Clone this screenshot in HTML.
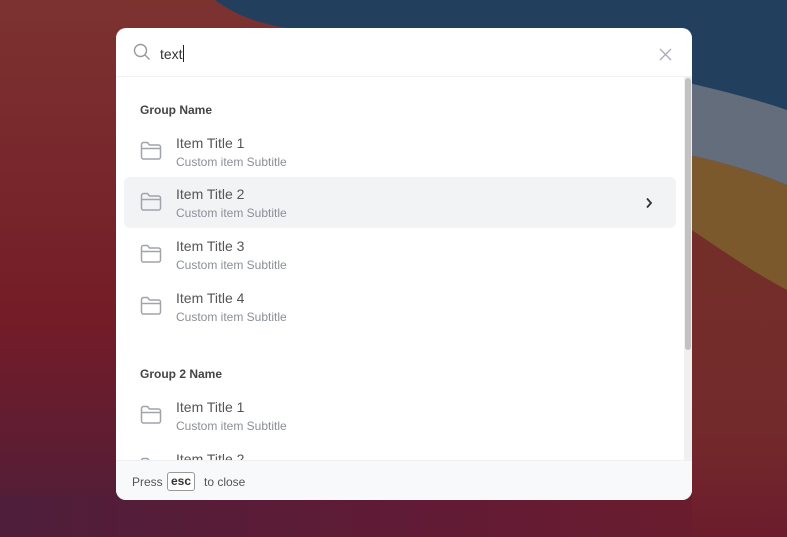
<!DOCTYPE html>
<html><head><style>
html,body{margin:0;width:787px;height:537px;overflow:hidden;font-family:"Liberation Sans",sans-serif;}
.bg{position:absolute;left:0;top:0}
.modal{position:absolute;left:116px;top:28px;width:576px;height:472px;background:#fff;border-radius:10px;overflow:hidden}
.hdr{position:absolute;left:0;top:0;width:576px;height:48px;border-bottom:1px solid #eef0f2}
.q{position:absolute;left:44px;top:17px;font-size:14px;color:#333}
.caret{display:inline-block;width:1px;height:17px;background:#222;vertical-align:-3px}
.scroll{position:absolute;left:0;top:49px;width:568px;height:383px;overflow:hidden}
.sb{position:absolute;left:568px;top:49px;width:8px;height:383px;background:#f0f0f0}
.thumb{position:absolute;left:569px;top:50px;width:6px;height:272px;background:#c2c2c2;border-radius:3px}
.g{position:absolute;left:24px;font-size:12px;font-weight:bold;color:#444}
.it{position:absolute;left:8px;width:552px;height:51px;border-radius:6px}
.it.sel{background:#f2f3f5}
.it svg.f{position:absolute;left:16px;top:15px}
.t{position:absolute;left:52px;top:9px;font-size:14px;color:#555}
.s{position:absolute;left:52px;top:29px;font-size:12px;color:#8a8f98}
.ft{position:absolute;left:0;top:432px;width:576px;height:40px;background:#f8f9fb;border-top:1px solid #eef0f2;font-size:12px;color:#555}
.kbd{position:absolute;left:51px;top:11px;width:26px;height:17px;border:1px solid #999;border-radius:3px;background:#fff;font-size:12px;font-weight:bold;text-align:center;line-height:16px;color:#333}
</style></head><body>
<svg class="bg" width="787" height="537">
<defs>
<linearGradient id="r" x1="0" y1="0" x2="0" y2="1"><stop offset="0" stop-color="#7c3330"/><stop offset=".6" stop-color="#741c28"/><stop offset="1" stop-color="#4e1e3a"/></linearGradient>
<linearGradient id="rb" x1="0" y1="0" x2="0" y2="1"><stop offset="0" stop-color="#74302a"/><stop offset=".7" stop-color="#732a2b"/><stop offset="1" stop-color="#6c1c2c"/></linearGradient>
<linearGradient id="bs" x1="0" y1="0" x2="1" y2="0"><stop offset="0" stop-color="#4e1e3a"/><stop offset=".5" stop-color="#601b36"/><stop offset="1" stop-color="#6e1c2c"/></linearGradient>
</defs>
<rect width="787" height="537" fill="url(#r)"/>
<rect x="0" y="495" width="787" height="42" fill="url(#bs)"/>
<path d="M600 180 C660 200 720 255 787 290 L787 537 L692 537 L692 495 L600 495Z" fill="url(#rb)"/>
<path d="M600 140 C680 150 740 165 787 185 L787 290 C720 255 660 200 600 180Z" fill="#7b592d"/>
<path d="M260 30 C450 40 650 60 787 110 L787 185 C740 165 680 150 600 140 L600 60 C450 55 300 50 260 30Z" fill="#646d7c"/>
<path d="M215 0 L787 0 L787 110 C700 80 500 40 300 30 C260 25 235 15 215 0Z" fill="#22405e"/>
</svg>
<div class="modal">
<div class="hdr">
<svg style="position:absolute;left:17px;top:15px" width="18" height="18" viewBox="0 0 18 18" fill="none" stroke="#999" stroke-width="1.4"><circle cx="7.5" cy="7.5" r="6"/><path d="M12 12l4.5 4.5"/></svg>
<div class="q">text<span class="caret"></span></div>
<svg style="position:absolute;left:543px;top:20px" width="13" height="13" viewBox="0 0 13 13" stroke="#aab" stroke-width="1.3"><path d="M1 1L12 12M12 1L1 12"/></svg>
</div>
<div class="scroll">
<div class="g" style="top:26px">Group Name</div>
<div class="it" style="top:49px"><svg class="f" width="22" height="20" viewBox="0 0 22 20" fill="none" stroke="#a0a4ab" stroke-width="1.5"><path d="M1.5 3.5a2 2 0 0 1 2-2h4l2 2.5h9a2 2 0 0 1 2 2v10a2 2 0 0 1-2 2h-15a2 2 0 0 1-2-2z M1.5 7.5h19"/></svg><div class="t">Item Title 1</div><div class="s">Custom item Subtitle</div></div>
<div class="it sel" style="top:100px"><svg class="f" width="22" height="20" viewBox="0 0 22 20" fill="none" stroke="#a0a4ab" stroke-width="1.5"><path d="M1.5 3.5a2 2 0 0 1 2-2h4l2 2.5h9a2 2 0 0 1 2 2v10a2 2 0 0 1-2 2h-15a2 2 0 0 1-2-2z M1.5 7.5h19"/></svg><div class="t">Item Title 2</div><div class="s">Custom item Subtitle</div>
<svg style="position:absolute;left:521px;top:20px" width="8" height="12" viewBox="0 0 8 12" fill="none" stroke="#333" stroke-width="1.8"><path d="M2 1.5L6 6L2 10.5"/></svg></div>
<div class="it" style="top:152px"><svg class="f" width="22" height="20" viewBox="0 0 22 20" fill="none" stroke="#a0a4ab" stroke-width="1.5"><path d="M1.5 3.5a2 2 0 0 1 2-2h4l2 2.5h9a2 2 0 0 1 2 2v10a2 2 0 0 1-2 2h-15a2 2 0 0 1-2-2z M1.5 7.5h19"/></svg><div class="t">Item Title 3</div><div class="s">Custom item Subtitle</div></div>
<div class="it" style="top:204px"><svg class="f" width="22" height="20" viewBox="0 0 22 20" fill="none" stroke="#a0a4ab" stroke-width="1.5"><path d="M1.5 3.5a2 2 0 0 1 2-2h4l2 2.5h9a2 2 0 0 1 2 2v10a2 2 0 0 1-2 2h-15a2 2 0 0 1-2-2z M1.5 7.5h19"/></svg><div class="t">Item Title 4</div><div class="s">Custom item Subtitle</div></div>
<div class="g" style="top:290px">Group 2 Name</div>
<div class="it" style="top:313px"><svg class="f" width="22" height="20" viewBox="0 0 22 20" fill="none" stroke="#a0a4ab" stroke-width="1.5"><path d="M1.5 3.5a2 2 0 0 1 2-2h4l2 2.5h9a2 2 0 0 1 2 2v10a2 2 0 0 1-2 2h-15a2 2 0 0 1-2-2z M1.5 7.5h19"/></svg><div class="t">Item Title 1</div><div class="s">Custom item Subtitle</div></div>
<div class="it" style="top:365px"><svg class="f" width="22" height="20" viewBox="0 0 22 20" fill="none" stroke="#a0a4ab" stroke-width="1.5"><path d="M1.5 3.5a2 2 0 0 1 2-2h4l2 2.5h9a2 2 0 0 1 2 2v10a2 2 0 0 1-2 2h-15a2 2 0 0 1-2-2z M1.5 7.5h19"/></svg><div class="t">Item Title 2</div><div class="s">Custom item Subtitle</div></div>
</div>
<div class="sb"></div><div class="thumb"></div>
<div class="ft"><span style="position:absolute;left:16px;top:14px">Press</span><div class="kbd">esc</div><span style="position:absolute;left:88px;top:14px">to close</span></div>
</div>
</body></html>
